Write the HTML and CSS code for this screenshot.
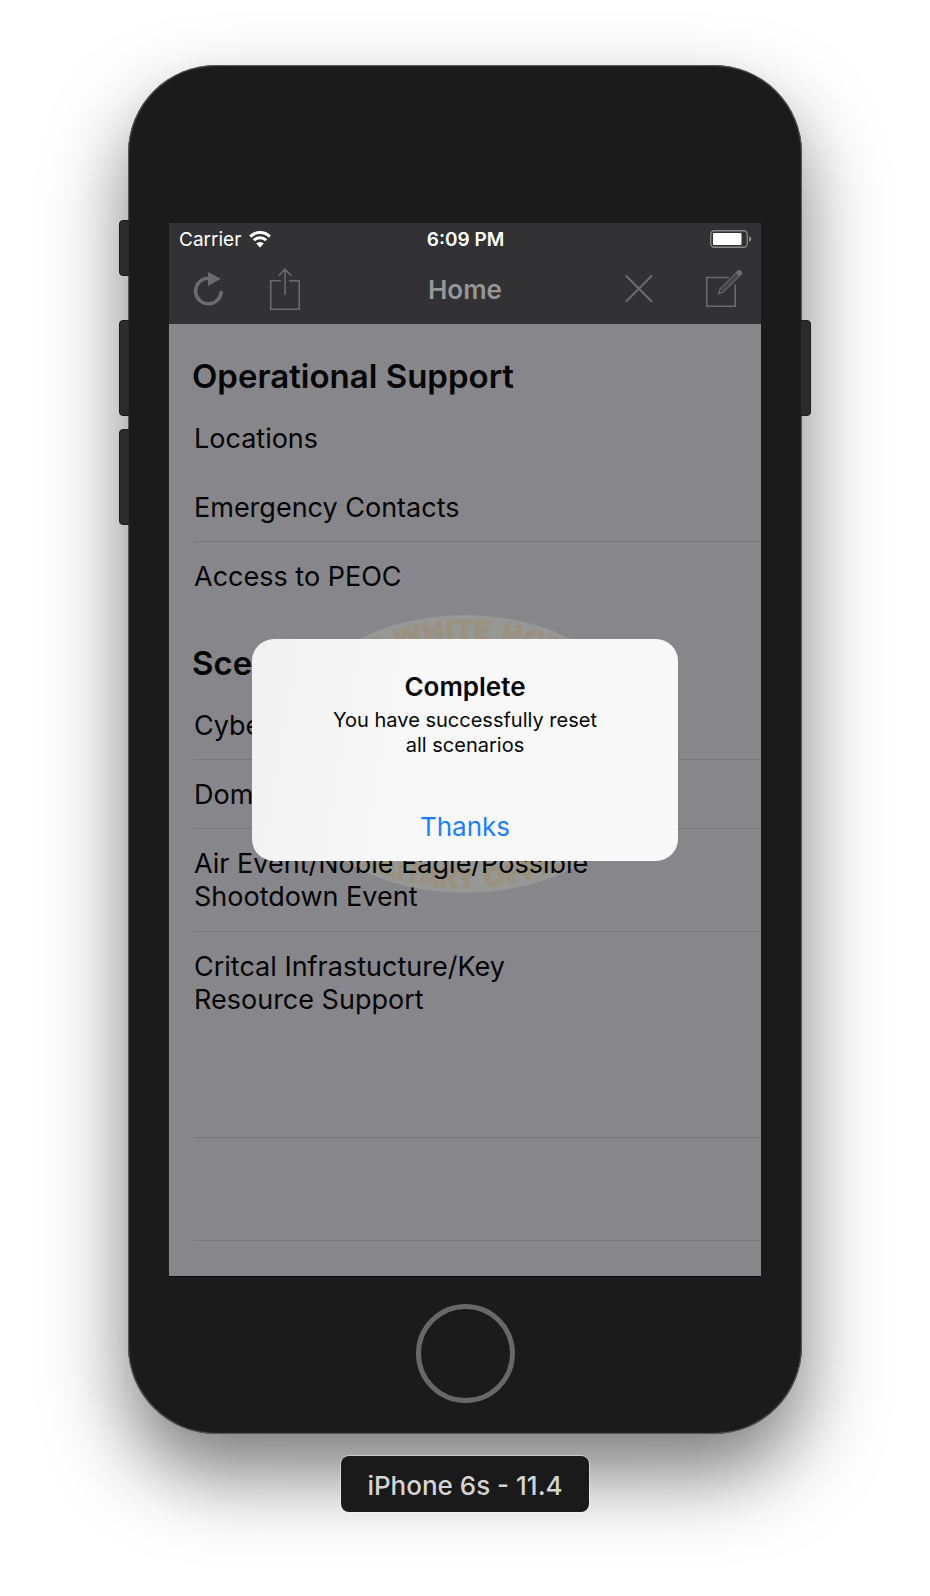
FILE: index.html
```html
<!DOCTYPE html>
<html lang="en">
<head>
<meta charset="utf-8">
<meta name="viewport" content="width=device-width, initial-scale=1">
<title>Home</title>
<link rel="stylesheet" href="styles.css">
</head>
<body>
<main class="stage">
  <div class="phone">
    <span class="side-key side-key-mute"></span>
    <span class="side-key side-key-up"></span>
    <span class="side-key side-key-down"></span>
    <span class="side-key side-key-power"></span>

    <div class="screen">
      <header class="header">
        <div class="status">
          <div class="status-left">
            <span>Carrier</span>
            <svg width="22" height="17" viewBox="0 0 22 17" aria-hidden="true">
              <path d="M1.2 5.6a14 14 0 0 1 19.6 0M4.8 9.3a8.8 8.8 0 0 1 12.4 0" fill="none" stroke="#fff" stroke-width="3"/>
              <path d="M7.2 12.6a5.4 5.4 0 0 1 7.6 0L11 16.6z" fill="#fff"/>
            </svg>
          </div>
          <time class="status-time">6:09 PM</time>
          <svg class="battery" width="42" height="18" viewBox="0 0 42 18" aria-hidden="true">
            <rect x="0.75" y="0.75" width="36.5" height="16.5" rx="3.5" fill="none" stroke="#89898a" stroke-width="1.3"/>
            <rect x="3" y="3" width="28.5" height="12" rx="1" fill="#fff"/>
            <path d="M39 6q2.4 1 2.4 3t-2.4 3z" fill="#89898a"/>
          </svg>
        </div>
        <nav class="nav">
          <div class="nav-left">
            <button class="icon-button" type="button" aria-label="Refresh">
              <svg width="48" height="48" viewBox="0 0 48 48" aria-hidden="true">
                <path d="M37.2 26A12.8 12.8 0 1 1 24.4 13.2" fill="none" stroke="currentColor" stroke-width="3.5"/>
                <path d="M24 7v14l12.8-7.3z" fill="currentColor"/>
              </svg>
            </button>
            <button class="icon-button" type="button" aria-label="Share">
              <svg width="48" height="48" viewBox="0 0 48 48" fill="none" stroke="currentColor" stroke-width="1.5" aria-hidden="true">
                <path d="M20 15.75H9.75v28.5h28.5v-28.5H28M24 30V4M17.6 10.8 24 4.4l6.4 6.4"/>
              </svg>
            </button>
          </div>
          <h1 class="nav-title">Home</h1>
          <div class="nav-right">
            <button class="icon-button" type="button" aria-label="Reset">
              <svg width="48" height="48" viewBox="0 0 48 48" fill="none" stroke="currentColor" stroke-width="2" aria-hidden="true">
                <path d="M10.8 10.5 37 36.7M37 10.5 10.8 36.7"/>
              </svg>
            </button>
            <button class="icon-button" type="button" aria-label="Compose">
              <svg width="48" height="48" viewBox="0 0 48 48" fill="none" stroke="currentColor" stroke-width="1.5" aria-hidden="true">
                <path d="M31 12.5H8.75v28.75h28.5V19.5"/>
                <path d="M20.8 28.4l1.4-4.6L38.4 7.8l3 3-16.2 16.2z" stroke-width="1.3"/>
                <path d="M23.6 25.6 39.8 9.4" stroke-width="1"/>
                <path d="M39.2 7l.9-.9q1-.9 2 0l1 1q.9 1 0 2l-.9.9z" fill="currentColor"/>
              </svg>
            </button>
          </div>
        </nav>
      </header>

      <div class="seal-layer" aria-hidden="true">
        <svg width="378" height="280" viewBox="0 0 378 280">
          <defs>
            <path id="seal-top" d="M25 140A164 115 0 0 1 353 140"/>
            <path id="seal-bottom" d="M8 140A181 134 0 0 0 370 140"/>
          </defs>
          <ellipse cx="189" cy="140" rx="189" ry="139" fill="#979796"/>
          <g class="seal-text" text-anchor="middle">
            <text><textPath href="#seal-top" startOffset="50%">THE WHITE HOUSE</textPath></text>
            <text><textPath href="#seal-bottom" startOffset="50%">MILITARY OFFICE</textPath></text>
          </g>
        </svg>
      </div>

      <div class="content">
        <section>
          <h2 class="section-title">Operational Support</h2>
          <ul class="rows">
            <li class="row row-plain">Locations</li>
            <li class="row">Emergency Contacts</li>
            <li class="row row-plain">Access to PEOC</li>
          </ul>
        </section>
        <section>
          <h2 class="section-title">Scenarios</h2>
          <ul class="rows">
            <li class="row">Cyber Event</li>
            <li class="row">Domestic Event</li>
            <li class="row row-tall">Air Event/Noble Eagle/Possible<br>Shootdown Event</li>
            <li class="row row-tall row-plain">Critcal Infrastucture/Key<br>Resource Support</li>
            <li class="row row-tall"></li>
            <li class="row row-tall"></li>
            <li class="row-end"></li>
          </ul>
        </section>
      </div>

      <div class="modal-layer">
        <div class="dialog" role="alertdialog" aria-labelledby="dialog-title" aria-describedby="dialog-message">
          <h2 class="dialog-title" id="dialog-title">Complete</h2>
          <p class="dialog-message" id="dialog-message">You have successfully reset<br>all scenarios</p>
          <button class="dialog-button" type="button">Thanks</button>
        </div>
      </div>
    </div>

    <div class="chin">
      <button class="home-button" type="button" aria-label="Home button"></button>
    </div>
  </div>
  <p class="device-label">iPhone 6s - 11.4</p>
</main>
</body>
</html>
```
FILE: styles.css
```css
* {
  box-sizing: border-box;
}

body {
  margin: 0;
  background: #fff;
  color: #050505;
  font-family: Inter, "Liberation Sans", sans-serif;
}

h1,
h2,
p,
ul {
  margin: 0;
  padding: 0;
}

button {
  padding: 0;
  border: 0;
  background: none;
  font: inherit;
}

.stage {
  display: flex;
  flex-direction: column;
  align-items: center;
  gap: 22px;
  padding: 65px 128px 80px;
}

.phone {
  position: relative;
  width: 100%;
  max-width: 720px;
  padding: 158px 41px 0;
  border-radius: 88px;
  background: #1b1b1b;
  box-shadow: inset 0 0 1px 1px #5c5f5f, 0 40px 80px rgba(0, 0, 0, 0.52);
}

.side-key {
  position: absolute;
  left: -9px;
  width: 11px;
  height: 96px;
  border: 1px solid #1b1b1b;
  border-radius: 4px 0 0 4px;
  background: #2b2b2b;
}

.side-key-mute {
  top: 155px;
  height: 56px;
}

.side-key-up {
  top: 255px;
}

.side-key-down {
  top: 364px;
}

.side-key-power {
  top: 255px;
  right: -9px;
  left: auto;
  border-radius: 0 4px 4px 0;
}

.screen {
  position: relative;
  background: #87868b;
  box-shadow: 0 1px #0a0a0a;
}

.header {
  background: #323234;
}

.status {
  display: grid;
  grid-template-columns: 1fr auto 1fr;
  align-items: center;
  height: 32px;
  padding: 0 9px 0 10px;
  color: #fff;
  font-size: 19px;
}

.status-left {
  display: flex;
  align-items: center;
  gap: 8px;
}

.status-time {
  font-weight: 600;
}

.battery {
  justify-self: end;
}

.nav {
  display: grid;
  grid-template-columns: 1fr auto 1fr;
  align-items: center;
  height: 69px;
  padding: 0 15px;
  color: #6c6c6d;
}

.nav-left,
.nav-right {
  display: flex;
  gap: 29px;
  padding-bottom: 2px;
}

.nav-right {
  justify-content: flex-end;
  gap: 35px;
}

.icon-button {
  width: 48px;
  height: 48px;
  color: inherit;
}

.icon-button svg {
  display: block;
}

.nav-title {
  color: #969697;
  font-size: 26px;
  font-weight: 600;
}

.seal-layer {
  position: absolute;
  inset: 0;
  display: grid;
  place-items: center;
  padding-top: 8px;
}

.seal-text {
  fill: #9a917f;
  stroke: #9a917f;
  stroke-width: 1px;
  font-family: "DejaVu Sans", sans-serif;
  font-size: 26px;
  font-weight: 700;
}

.content {
  position: relative;
  padding-left: 23px;
}

.section-title {
  height: 80px;
  padding-top: 32px;
  font-size: 33px;
  font-weight: 600;
  line-height: 40px;
}

.rows {
  padding-left: 2px;
  list-style: none;
}

.row {
  display: flex;
  align-items: center;
  height: 69px;
  border-bottom: 1px solid #77767b;
  font-size: 27px;
  line-height: 33px;
}

.row-tall {
  height: 103px;
}

.row-plain {
  border-bottom-color: transparent;
}

.row-end {
  height: 35px;
}

.modal-layer {
  position: absolute;
  inset: 0;
  display: grid;
  place-items: center;
}

.dialog {
  display: flex;
  flex-direction: column;
  width: 72%;
  padding-top: 32px;
  border-radius: 22px;
  background: linear-gradient(100deg, #f1f1f1, #f8f8f8 35%, #f8f8f8);
  text-align: center;
}

.dialog-title {
  font-size: 26px;
  font-weight: 600;
  line-height: 32px;
}

.dialog-message {
  padding: 5px 16px 36px;
  font-size: 20px;
  line-height: 25px;
}

.dialog-button {
  padding-bottom: 2px;
  color: #1a80ff;
  font-size: 26px;
  line-height: 65px;
}

.chin {
  display: grid;
  justify-items: center;
  padding: 28px 0 31px;
}

.home-button {
  width: 99px;
  height: 99px;
  border: 5px solid #686868;
  border-radius: 50%;
}

.device-label {
  position: relative;
  padding: 3px 26px 0;
  border-radius: 8px;
  background: #1a1a1a;
  box-shadow: 0 0 0 1px rgba(255, 255, 255, 0.4);
  color: #d4d4d4;
  font-size: 26px;
  font-weight: 500;
  line-height: 53px;
}
```
